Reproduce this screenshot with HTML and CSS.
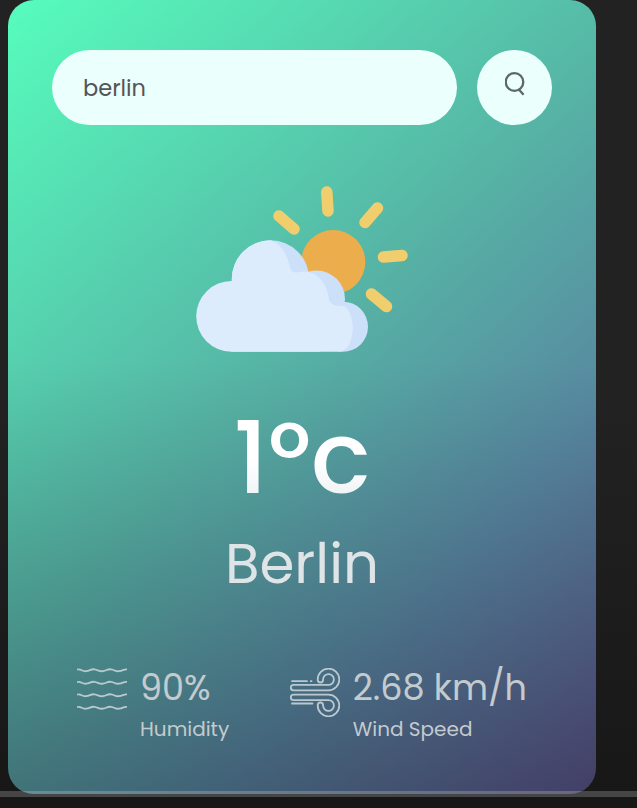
FILE: index.html
```html
<!DOCTYPE html>
<html lang="en">
<head>
<meta charset="utf-8">
<title>Weather</title>
<link rel="stylesheet" href="styles.css">
</head>
<body>
<main class="card">
  <form class="search">
    <input class="search-input" type="text" value="berlin" aria-label="City" spellcheck="false">
    <button class="search-button" type="button" aria-label="Search">
      <svg class="search-icon" viewBox="0 0 20 24"><circle cx="9.5" cy="10" r="8.8"/><path d="M13.4 17 18.600 22.800"/></svg>
    </button>
  </form>
  <section class="weather">
    <svg class="weather-icon" viewBox="195 185 214 168">
      <g class="rays">
        <path d="M326.8 192 328 211M279 216 294 229M377.5 208 365 222.5M383.5 257 402 255.5M371.5 294 386.5 306.5"/>
      </g>
      <circle class="sun" cx="333.3" cy="262" r="32"/>
      <g class="cloud-shade">
        <circle cx="270.5" cy="279" r="38.7"/>
        <circle cx="316.5" cy="299" r="28.5"/>
        <circle cx="343" cy="326.7" r="25"/>
        <path d="M231 300H320V351.700H231Z"/>
      </g>
      <path class="cloud" d="M231.300 351.700A35.300 35.300 0 0 1 231.800 281V279A38.700 38.700 0 0 1 270.500 240.300C283 245 288 257 290 268 292 273 295 273 299 272 302 271.200 306 271.200 309 272 322 276 328 288 329 300 331 305 335 306 344 306 350 310 352.700 319 352.700 327 352.700 338 349 350 341 351.700Z"/>
    </svg>
    <h1 class="temp">1°c</h1>
    <h2 class="city">Berlin</h2>
  </section>
  <section class="details">
    <div class="detail humidity">
      <svg class="detail-icon" viewBox="0 0 50 49">
        <path d="M.5 1.500C4 .5 5 3.700 9 3.200S14 .8 17.500 1.300 22 3.700 26 3.200 30 .8 34 1.300 38 3.700 42 3.200 46 1.300 49.500 1.300"/>
        <path d="M.5 14C4 13 5 16.200 9 15.700S14 13.300 17.500 13.800 22 16.200 26 15.700 30 13.300 34 13.800 38 16.200 42 15.700 46 13.800 49.500 13.800"/>
        <path d="M.5 26.500C4 25.500 5 28.700 9 28.200S14 25.800 17.500 26.300 22 28.700 26 28.200 30 25.800 34 26.300 38 28.700 42 28.200 46 26.300 49.500 26.300"/>
        <path d="M.5 39C4 38 5 41.200 9 40.700S14 38.300 17.500 38.800 22 41.200 26 40.700 30 38.300 34 38.800 38 41.200 42 40.700 46 38.800 49.500 38.800"/>
      </svg>
      <div>
        <p class="value">90%</p>
        <p class="label">Humidity</p>
      </div>
    </div>
    <div class="detail wind">
      <svg class="detail-icon" viewBox="0 0 50 49">
        <path d="M38.500 22.300A10.800 10.800 0 1 0 27.700 11.500C27.700 15.500 33.100 15.500 33.100 11.500A5.400 5.400 0 1 1 38.500 16.900H3.500A2.700 2.700 0 0 0 3.500 22.300Z"/>
        <path d="M38.500 26.700A10.800 10.800 0 1 1 27.700 37.500C27.700 33.500 33.100 33.500 33.100 37.500A5.400 5.400 0 1 0 38.500 32.100H3.500A2.700 2.700 0 0 1 3.500 26.700Z"/>
        <path d="M2 13.200H17M20.800 13.200H21.500M2 35.500H22.500"/>
      </svg>
      <div>
        <p class="value">2.68 km/h</p>
        <p class="label">Wind Speed</p>
      </div>
    </div>
  </section>
</main>
<div class="progress"></div>
</body>
</html>
```
FILE: styles.css
```css
* {
  box-sizing: border-box;
  margin: 0;
  padding: 0;
  font-family: Poppins, Inter, sans-serif;
}

body {
  position: relative;
  height: 808px;
  overflow: hidden;
  background: linear-gradient(#222 0, #222 400px, #171717 808px);
}

.card {
  width: 588px;
  height: 794px;
  margin-left: 8px;
  padding: 50px 44px 0;
  border-radius: 26px;
  color: #fff;
  background:
    linear-gradient(transparent 360px, rgba(0, 0, 0, .26) 794px),
    linear-gradient(138deg, #56fdbd, #56b3a5 46%, #5883a0 74%, #5b548a);
}

.search {
  display: flex;
  gap: 20px;
}

.search-input {
  flex: 1;
  min-width: 0;
  height: 75px;
  padding: 0 31px;
  border: 0;
  border-radius: 38px;
  outline: 0;
  background: #ebfffc;
  color: #555;
  font-size: 22.500px;
}

.search-button {
  width: 75px;
  height: 75px;
  padding-bottom: 8px;
  border: 0;
  border-radius: 50%;
  background: #ebfffc;
}

.search-icon {
  display: block;
  width: 20px;
  height: 24px;
  margin: 0 auto;
  fill: none;
  stroke: #5d6866;
  stroke-width: 2.300;
}

.weather {
  display: flex;
  flex-direction: column;
  align-items: center;
  padding-top: 60px;
}

.weather-icon {
  width: 214px;
  height: 168px;
}

.rays {
  fill: none;
  stroke: #f1ce6d;
  stroke-width: 11.500;
  stroke-linecap: round;
}

.sun { fill: #ecae4c; }
.cloud-shade { fill: #cce0fa; }
.cloud { fill: #ddecfd; }

.temp {
  margin-top: 45px;
  font-size: 100px;
  font-weight: 500;
  line-height: 121px;
  background: linear-gradient(#fff 50%, #eef2f4 85%);
  background-clip: text;
  color: transparent;
}

.city {
  margin-top: 9px;
  font-size: 56.250px;
  font-weight: 400;
  line-height: 71px;
  color: #dfe4e7;
}

.details {
  display: flex;
  justify-content: space-between;
  margin-top: 67px;
  padding: 0 25px;
}

.detail {
  display: flex;
  gap: 13px;
  color: #c3cbce;
}

.detail-icon {
  width: 50px;
  height: 49px;
  margin-top: 2px;
  fill: none;
  stroke: #b9c9cf;
  stroke-width: 1.800;
  stroke-linecap: round;
}

.value {
  font-size: 35px;
  line-height: 43px;
  white-space: nowrap;
}

.label {
  margin-top: 8px;
  font-size: 20px;
  line-height: 24px;
}

.progress {
  position: absolute;
  left: 0;
  top: 791px;
  width: 100%;
  height: 6px;
  background: rgba(255, 255, 255, .2);
}
```
